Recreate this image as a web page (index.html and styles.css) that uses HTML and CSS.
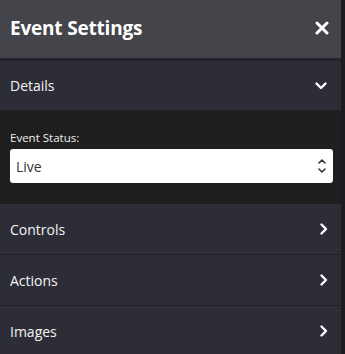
FILE: index.html
```html
<!DOCTYPE html>
<html lang="en">
<head>
    <meta charset="UTF-8">
    <meta name="viewport" content="width=device-width, initial-scale=1.0">
    <title>Event Settings</title>
    <link rel="stylesheet" href="styles.css">
</head>
<body>
    <div class="panel">
        <!-- Header -->
        <div class="panel-header">
            <h1 class="panel-title">Event Settings</h1>
            <button class="close-button" type="button" aria-label="Close">
                <svg width="14" height="14" viewBox="0 0 14 14">
                    <path d="M2 2 L12 12 M12 2 L2 12" stroke="#ffffff" stroke-width="3" stroke-linecap="round"/>
                </svg>
            </button>
        </div>

        <!-- Details (open) -->
        <div class="section open">
            <div class="section-head">
                <span>Details</span>
                <svg class="chevron" width="14" height="14" viewBox="0 0 14 14">
                    <path d="M2.5 4.5 L7 9 L11.5 4.5" fill="none" stroke="#ffffff" stroke-width="2.4" stroke-linecap="round" stroke-linejoin="round"/>
                </svg>
            </div>
            <div class="section-body">
                <label class="field-label">Event Status:</label>
                <div class="select">
                    <span>Live</span>
                    <svg width="10" height="18" viewBox="0 0 10 18">
                        <path d="M2 6 L5 3 L8 6 M2 12 L5 15 L8 12" fill="none" stroke="#333333" stroke-width="1.6" stroke-linecap="round" stroke-linejoin="round"/>
                    </svg>
                </div>
            </div>
        </div>

        <div class="section">
            <div class="section-head">
                <span>Controls</span>
                <svg class="chevron" width="14" height="14" viewBox="0 0 14 14">
                    <path d="M4.5 2.5 L9 7 L4.5 11.5" fill="none" stroke="#ffffff" stroke-width="2.4" stroke-linecap="round" stroke-linejoin="round"/>
                </svg>
            </div>
        </div>

        <div class="section">
            <div class="section-head">
                <span>Actions</span>
                <svg class="chevron" width="14" height="14" viewBox="0 0 14 14">
                    <path d="M4.5 2.5 L9 7 L4.5 11.5" fill="none" stroke="#ffffff" stroke-width="2.4" stroke-linecap="round" stroke-linejoin="round"/>
                </svg>
            </div>
        </div>

        <div class="section">
            <div class="section-head">
                <span>Images</span>
                <svg class="chevron" width="14" height="14" viewBox="0 0 14 14">
                    <path d="M4.5 2.5 L9 7 L4.5 11.5" fill="none" stroke="#ffffff" stroke-width="2.4" stroke-linecap="round" stroke-linejoin="round"/>
                </svg>
            </div>
        </div>
    </div>
</body>
</html>
```

FILE: styles.css
```css
* {
    margin: 0;
    padding: 0;
    box-sizing: border-box;
}

body {
    background-color: #1d1d21;
    color: #f4f4f4;
    font-family: 'Open Sans', 'Noto Sans', sans-serif;
    height: 354px;
    overflow: hidden;
}

.panel {
    width: 341px;
    height: 354px;
    background-color: #2d2d37;
}

/* Header */
.panel-header {
    height: 61px;
    background-color: #44444b;
    border-bottom: 3px solid #232328;
    display: flex;
    align-items: center;
    justify-content: space-between;
    padding: 0 12px 2px 10px;
}

.panel-title {
    font-size: 19px;
    font-weight: 700;
    color: #ffffff;
    letter-spacing: -0.2px;
}

.close-button {
    background: none;
    border: none;
    display: flex;
    cursor: pointer;
}

/* Sections */
.section {
    border-bottom: 1px solid #1e1e23;
}

.section-head {
    height: 50px;
    display: flex;
    align-items: center;
    justify-content: space-between;
    padding: 0 10px 0 10px;
    font-size: 14px;
    background-color: #2d2d37;
}

.section.open .section-head {
    height: 49px;
    padding-right: 13px;
}

.section-body {
    background-color: #1f1f1f;
    padding: 20px 8px 20px 10px;
    height: 93px;
}

.field-label {
    display: block;
    font-size: 11.5px;
    color: #f0f0f0;
    margin-bottom: 4px;
}

.select {
    height: 34px;
    background-color: #ffffff;
    border-radius: 3px;
    display: flex;
    align-items: center;
    justify-content: space-between;
    padding: 0 6px 0 6px;
    font-size: 14px;
    color: #333333;
}
```
